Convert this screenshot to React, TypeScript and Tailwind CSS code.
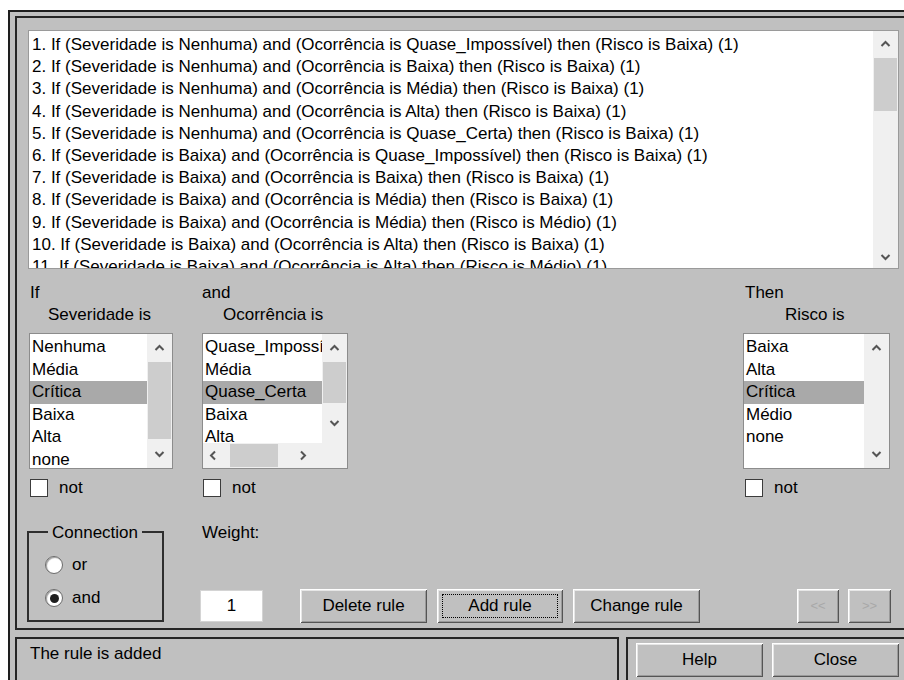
import React from "react";

const rules = [
  "1. If (Severidade is Nenhuma) and (Ocorrência is Quase_Impossível) then (Risco is Baixa) (1)",
  "2. If (Severidade is Nenhuma) and (Ocorrência is Baixa) then (Risco is Baixa) (1)",
  "3. If (Severidade is Nenhuma) and (Ocorrência is Média) then (Risco is Baixa) (1)",
  "4. If (Severidade is Nenhuma) and (Ocorrência is Alta) then (Risco is Baixa) (1)",
  "5. If (Severidade is Nenhuma) and (Ocorrência is Quase_Certa) then (Risco is Baixa) (1)",
  "6. If (Severidade is Baixa) and (Ocorrência is Quase_Impossível) then (Risco is Baixa) (1)",
  "7. If (Severidade is Baixa) and (Ocorrência is Baixa) then (Risco is Baixa) (1)",
  "8. If (Severidade is Baixa) and (Ocorrência is Média) then (Risco is Baixa) (1)",
  "9. If (Severidade is Baixa) and (Ocorrência is Média) then (Risco is Médio) (1)",
  "10. If (Severidade is Baixa) and (Ocorrência is Alta) then (Risco is Baixa) (1)",
  "11. If (Severidade is Baixa) and (Ocorrência is Alta) then (Risco is Médio) (1)",
  "12. If (Severidade is Baixa) and (Ocorrência is Quase_Certa) then (Risco is Médio) (1)",
];

type Dir = "up" | "down" | "left" | "right";

function Chevron({ dir }: { dir: Dir }) {
  const pts = {
    up: "1.5,7 5.5,3 9.5,7",
    down: "1.5,3 5.5,7 9.5,3",
    left: "7,1.5 3,5.5 7,9.5",
    right: "3,1.5 7,5.5 3,9.5",
  }[dir];
  return (
    <svg width="11" height="11" viewBox="0 0 11 11">
      <polyline points={pts} fill="none" stroke="#555" strokeWidth="2" />
    </svg>
  );
}

function VScroll({ thumb, downH = 28 }: { thumb: number; downH?: number }) {
  return (
    <div className="w-[25px] h-full bg-[#f0f0f0] flex flex-col">
      <div className="h-[28px] flex items-center justify-center">
        <Chevron dir="up" />
      </div>
      {thumb > 0 && <div className="bg-[#cdcdcd] mx-[1px]" style={{ height: thumb }} />}
      <div className="flex-1" />
      <div className="flex items-center justify-center" style={{ height: downH }}>
        <Chevron dir="down" />
      </div>
    </div>
  );
}

function ListBox({
  items,
  selected,
  thumb,
  downH,
  hscroll = false,
}: {
  items: string[];
  selected: number;
  thumb: number;
  downH?: number;
  hscroll?: boolean;
}) {
  return (
    <div className="h-[136px] bg-white border border-[#8c8c8c] flex flex-col overflow-hidden">
      <div className="flex flex-1 min-h-0">
        <div className="flex-1 min-w-0 pt-[2px] overflow-hidden">
          {items.map((it, i) => (
            <div
              key={i}
              className={`h-[22.5px] leading-[22.5px] pl-[2px] whitespace-nowrap ${
                i === selected ? "bg-[#a9a9a9]" : ""
              }`}
            >
              {it}
            </div>
          ))}
        </div>
        <VScroll thumb={thumb} downH={downH} />
      </div>
      {hscroll && (
        <div className="h-[25px] flex bg-[#f0f0f0]">
          <div className="w-[27px] flex items-center pl-[5px]">
            <Chevron dir="left" />
          </div>
          <div className="w-[48px] bg-[#cdcdcd] my-[1px]" />
          <div className="flex-1 flex items-center justify-end pr-[13px]">
            <Chevron dir="right" />
          </div>
          <div className="w-[25px]" />
        </div>
      )}
    </div>
  );
}

function Check({ className = "" }: { className?: string }) {
  return (
    <div className={`flex items-center h-[18px] ${className}`}>
      <span className="w-[18px] h-[18px] bg-white border border-[#3c3c3c]" />
      <span className="ml-[11px] leading-[18px]">not</span>
    </div>
  );
}

function Radio({ label, checked = false }: { label: string; checked?: boolean }) {
  return (
    <div className="flex items-center h-[18px]">
      <span className="w-[18px] h-[18px] rounded-full bg-white border border-[#6b6b6b] shadow-[inset_1px_1px_1px_#a0a0a0] flex items-center justify-center">
        {checked && <span className="w-[9px] h-[9px] rounded-full bg-[#1e1e1e]" />}
      </span>
      <span className="ml-[9px]">{label}</span>
    </div>
  );
}

function Btn({
  children,
  className = "",
  focus = false,
  disabled = false,
}: {
  children: React.ReactNode;
  className?: string;
  focus?: boolean;
  disabled?: boolean;
}) {
  return (
    <button
      className={`relative flex items-center justify-center bg-[#c0c0c0] shadow-[inset_1px_1px_0_#fff,inset_-1px_-1px_0_#555,inset_2px_2px_0_#e6e6e6,inset_-2px_-2px_0_#9a9a9a] ${
        disabled ? "text-[#a8a8a8] text-[13px]" : "text-black"
      } ${className}`}
    >
      {focus && (
        <span className="absolute left-[5px] right-[5px] top-[5px] bottom-[5px] border border-dotted border-black" />
      )}
      {children}
    </button>
  );
}

export default function App() {
  return (
    <div className="w-[904px] h-[680px] overflow-hidden bg-white pl-[8px] pt-[10px] font-['Liberation_Sans',Arial,sans-serif] text-[17px] text-black">
      <div className="w-[1000px] h-[760px] bg-[#c0c0c0] border-l-2 border-t-2 border-[#1e1e1e] pl-[5px] pt-[4px]">
        {/* rule editor panel */}
        <div className="w-[900px] h-[614px] border-2 border-[#262626] pl-[11px] pt-[12px]">
          <div className="w-[871px] h-[239px] bg-white border border-[#9a9a9a] flex overflow-hidden">
            <div className="flex-1 min-w-0 pl-[3px] pt-[3px] overflow-hidden">
              {rules.map((r) => (
                <div key={r} className="h-[22.2px] leading-[22.2px] whitespace-nowrap">
                  {r}
                </div>
              ))}
            </div>
            <div className="w-[25px] h-full bg-[#f0f0f0] flex flex-col">
              <div className="h-[27px] flex items-center justify-center">
                <Chevron dir="up" />
              </div>
              <div className="h-[53px] bg-[#cdcdcd] mx-[1px]" />
              <div className="flex-1" />
              <div className="h-[22px] flex items-center justify-center">
                <Chevron dir="down" />
              </div>
            </div>
          </div>

          <div className="flex mt-[13px]">
            <div className="ml-[1px] w-[144px]">
              <div className="h-[22px] leading-[22px] pl-[1px]">If</div>
              <div className="h-[22px] leading-[22px] pl-[19px]">Severidade is</div>
              <div className="mt-[7px]">
                <ListBox
                  items={["Nenhuma", "Média", "Crítica", "Baixa", "Alta", "none"]}
                  selected={2}
                  thumb={77}
                />
              </div>
              <Check className="mt-[10px] ml-[1px]" />
            </div>

            <div className="ml-[29px] w-[146px]">
              <div className="h-[22px] leading-[22px]">and</div>
              <div className="h-[22px] leading-[22px] pl-[21px]">Ocorrência is</div>
              <div className="mt-[7px]">
                <ListBox
                  items={["Quase_Impossível", "Média", "Quase_Certa", "Baixa", "Alta", "none"]}
                  selected={2}
                  thumb={41}
                  downH={40}
                  hscroll
                />
              </div>
              <Check className="mt-[10px] ml-[1px]" />
            </div>

            <div className="ml-[395px] w-[147px]">
              <div className="h-[22px] leading-[22px] pl-[2px]">Then</div>
              <div className="h-[22px] leading-[22px] pl-[42px]">Risco is</div>
              <div className="mt-[7px]">
                <ListBox
                  items={["Baixa", "Alta", "Crítica", "Médio", "none"]}
                  selected={2}
                  thumb={0}
                />
              </div>
              <Check className="mt-[10px] ml-[2px]" />
            </div>
          </div>

          <div className="flex mt-[25px] h-[101px]">
            <div className="ml-[-1px] mt-[9px] w-[137px] h-[91px] border-2 border-[#2e2e2e] relative">
              <span className="absolute left-[19px] top-[-11px] px-[4px] bg-[#c0c0c0] leading-[22px]">
                Connection
              </span>
              <div className="flex flex-col gap-[15px] pl-[16px] pt-[23px]">
                <Radio label="or" />
                <Radio label="and" checked />
              </div>
            </div>

            <div className="ml-[36px] flex flex-col">
              <div className="h-[22px] leading-[22px] pl-[2px]">Weight:</div>
              <div className="mt-[46px] w-[63px] h-[32px] bg-white border border-[#d4d4d4] flex items-center justify-center">
                1
              </div>
            </div>

            <div className="flex mt-[67px] h-[34px]">
              <Btn className="ml-[37px] w-[127px] h-[34px]">Delete rule</Btn>
              <Btn className="ml-[10px] w-[126px] h-[34px]" focus>
                Add rule
              </Btn>
              <Btn className="ml-[10px] w-[127px] h-[34px]">Change rule</Btn>
              <Btn className="ml-[97px] w-[42px] h-[34px]" disabled>
                &lt;&lt;
              </Btn>
              <Btn className="ml-[9px] w-[43px] h-[34px]" disabled>
                &gt;&gt;
              </Btn>
            </div>
          </div>
        </div>

        {/* status line and dialog buttons */}
        <div className="flex gap-[7px] mt-[7px]">
          <div className="w-[604px] h-[80px] border-2 border-[#262626] pl-[13px] pt-[4px]">
            <div className="leading-[22px]">The rule is added</div>
          </div>
          <div className="w-[300px] h-[80px] border-2 border-[#262626] flex gap-[9px] pl-[8px] pt-[4px]">
            <Btn className="w-[127px] h-[34px]">Help</Btn>
            <Btn className="w-[127px] h-[34px]">Close</Btn>
          </div>
        </div>
      </div>
    </div>
  );
}
